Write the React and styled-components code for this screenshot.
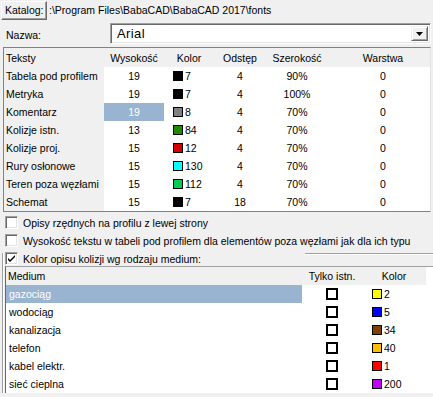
import React from 'react';
import styled, { createGlobalStyle } from 'styled-components';

const Global = createGlobalStyle`
  html, body { margin: 0; padding: 0; background: #f0f0f0; }
  body { font-family: "Liberation Sans", Arial, sans-serif; font-size: 10.5px; color: #000; }
  * { box-sizing: border-box; }
`;

const Window = styled.div`
  width: 433px;
  height: 397px;
  overflow: hidden;
  background: #f0f0f0;
  display: flex;
  flex-direction: column;
`;

const TopRow = styled.div`
  display: flex;
  align-items: center;
  gap: 2px;
  padding: 1px 0 0 1px;
  height: 20px;
`;

const Button = styled.button`
  width: 46px;
  height: 19px;
  padding: 0 0 1px 3px;
  text-align: left;
  font: inherit;
  background: #f0f0f0;
  border: 1px solid;
  border-color: #fff #696969 #696969 #fff;
  box-shadow: inset -1px -1px #a0a0a0;
  color: #000;
`;

const PathText = styled.span`
  white-space: nowrap;
  padding-bottom: 1px;
`;

const NameRow = styled.div`
  display: flex;
  align-items: center;
  margin-top: 3px;
  height: 21px;
`;

const FieldLabel = styled.span`
  width: 110px;
  padding-left: 6px;
  padding-top: 3px;
`;

const Combo = styled.div`
  width: 321px;
  height: 21px;
  display: flex;
  align-items: center;
  background: #fff;
  border: 1px solid;
  border-color: #a0a0a0 #fff #fff #a0a0a0;
  box-shadow: inset 1px 1px #696969, inset -1px -1px #e3e3e3;
  padding: 2px 2px 2px 6px;
`;

const ComboText = styled.span`
  flex: 1;
  font-size: 13px;
  letter-spacing: 0.4px;
`;

const DropButton = styled.div`
  width: 17px;
  height: 15px;
  background: #f0f0f0;
  border: 1px solid;
  border-color: #f0f0f0 #696969 #696969 #f0f0f0;
  box-shadow: inset 1px 1px #fff, inset -1px -1px #a0a0a0;
  display: flex;
  align-items: center;
  justify-content: center;
`;

const Table = styled.div`
  margin: 3px 0 0 3px;
  width: 428px;
  height: 165px;
  border: 1px solid #828282;
  border-right-color: #e3e3e3;
  overflow: hidden;
  background: #fff;
`;

const UpperRow = styled.div`
  display: grid;
  grid-template-columns: 100px 60px 50px 52px 62px 110px;
  height: ${p => p.$h}px;
  align-items: stretch;
`;

const Cell = styled.div`
  display: flex;
  align-items: center;
  justify-content: ${p => (p.$left ? 'flex-start' : 'center')};
  padding-left: ${p => p.$pl || 0}px;
  background: ${p => (p.$sel ? '#99b4d1' : p.$gray ? '#f0f0f0' : '#fff')};
  color: ${p => (p.$sel ? '#fff' : '#000')};
  white-space: nowrap;
  overflow: hidden;
  gap: ${p => p.$gap || 0}px;
`;

const Swatch = styled.span`
  width: 10px;
  height: 10px;
  background: ${p => p.$c};
  border: 1px solid #000;
  flex: none;
`;

const Checks = styled.div`
  display: flex;
  flex-direction: column;
  gap: 5px;
  padding-top: 4px;
`;

const CheckRow = styled.label`
  display: flex;
  align-items: center;
  height: 13px;
  gap: 5px;
  margin-left: ${p => p.$ml ?? 5}px;
  width: ${p => (p.$w ? `${p.$w}px` : 'auto')};
  white-space: nowrap;
`;

const Box = styled.span`
  width: 13px;
  height: 13px;
  flex: none;
  background: #fff;
  border: 1px solid;
  border-color: #a0a0a0 #fff #fff #a0a0a0;
  box-shadow: inset 1px 1px #696969, inset -1px -1px #e3e3e3;
  display: flex;
  align-items: center;
  justify-content: center;
`;

const Group = styled.div`
  margin-left: 2px;
  flex: 1;
  display: flex;
  flex-direction: column;
`;

const GroupHead = styled.div`
  display: flex;
  align-items: flex-start;
  height: 13px;
`;

const Corner = styled.div`
  width: 1px;
  margin-top: 1px;
  border-top: 1px solid #a0a0a0;
`;

const Rule = styled.div`
  flex: 1;
  margin-top: 1px;
  height: 2px;
  border-top: 1px solid #a0a0a0;
  border-bottom: 1px solid #fff;
`;

const GroupBody = styled.div`
  flex: 1;
  margin-top: -12px;
  padding: 13px 0 0 2px;
  border-left: 1px solid #a0a0a0;
  box-shadow: inset 1px 0 #fff;
  display: flex;
  flex-direction: column;
`;

const Grid = styled.div`
  flex: 1;
  border-top: 1px solid #a0a0a0;
  border-left: 1px solid #696969;
  background: #fff;
  width: 440px;
`;

const LowerRow = styled.div`
  display: grid;
  grid-template-columns: 296px 60px 64px 1fr;
  height: 18px;
`;

const Tick = styled.span`
  width: 12px;
  height: 12px;
  border: 2px solid #000;
  background: #fff;
`;

const upper = [
  ['Tabela pod profilem', '19', '#000', '7', '4', '90%', '0'],
  ['Metryka', '19', '#000', '7', '4', '100%', '0'],
  ['Komentarz', '19', '#808080', '8', '4', '70%', '0', true],
  ['Kolizje istn.', '13', '#1f8a00', '84', '4', '70%', '0'],
  ['Kolizje proj.', '15', '#d40000', '12', '4', '70%', '0'],
  ['Rury osłonowe', '15', '#00ffff', '130', '4', '70%', '0'],
  ['Teren poza węzłami', '15', '#00cc55', '112', '4', '70%', '0'],
  ['Schemat', '15', '#000', '7', '18', '70%', '0'],
];

const lower = [
  ['gazociąg', '#ffff00', '2', true],
  ['wodociąg', '#0000ff', '5'],
  ['kanalizacja', '#804000', '34'],
  ['telefon', '#ffbf00', '40'],
  ['kabel elektr.', '#ff0000', '1'],
  ['sieć cieplna', '#bf00ff', '200'],
];

const CheckMark = () => (
  <svg width="9" height="9" viewBox="0 0 9 9">
    <path d="M1 4 L3 6 L8 1 L8 3 L3 8 L1 6 Z" fill="#000" />
  </svg>
);

export default function App() {
  return (
    <>
      <Global />
      <Window>
        <TopRow>
          <Button>Katalog:</Button>
          <PathText>:\Program Files\BabaCAD\BabaCAD 2017\fonts</PathText>
        </TopRow>
        <NameRow>
          <FieldLabel>Nazwa:</FieldLabel>
          <Combo>
            <ComboText>Arial</ComboText>
            <DropButton>
              <svg width="7" height="4" viewBox="0 0 7 4">
                <path d="M0 0 H7 L3.5 4 Z" fill="#000" />
              </svg>
            </DropButton>
          </Combo>
        </NameRow>
        <Table>
          <UpperRow $h={19}>
            <Cell $gray $left $pl={2}>Teksty</Cell>
            <Cell $gray>Wysokość</Cell>
            <Cell $gray>Kolor</Cell>
            <Cell $gray>Odstęp</Cell>
            <Cell $gray>Szerokość</Cell>
            <Cell $gray>Warstwa</Cell>
          </UpperRow>
          {upper.map(([n, h, c, k, o, s, w, sel]) => (
            <UpperRow $h={18} key={n}>
              <Cell $gray $left $pl={2}>{n}</Cell>
              <Cell $sel={sel}>{h}</Cell>
              <Cell $left $pl={9} $gap={2}>
                <Swatch $c={c} />
                {k}
              </Cell>
              <Cell>{o}</Cell>
              <Cell>{s}</Cell>
              <Cell>{w}</Cell>
            </UpperRow>
          ))}
        </Table>
        <Checks>
          <CheckRow>
            <Box />
            Opisy rzędnych na profilu z lewej strony
          </CheckRow>
          <CheckRow>
            <Box />
            Wysokość tekstu w tabeli pod profilem dla elementów poza węzłami jak dla ich typu
          </CheckRow>
          <Group>
            <GroupHead>
              <Corner />
              <CheckRow $ml={2} $w={300}>
                <Box>
                  <CheckMark />
                </Box>
                Kolor opisu kolizji wg rodzaju medium:
              </CheckRow>
              <Rule />
            </GroupHead>
            <GroupBody>
              <Grid>
                <LowerRow>
                  <Cell $gray $left $pl={2}>Medium</Cell>
                  <Cell $gray>Tylko istn.</Cell>
                  <Cell $gray>Kolor</Cell>
                  <Cell />
                </LowerRow>
                {lower.map(([n, c, k, sel]) => (
                  <LowerRow key={n}>
                    <Cell $left $pl={3} $sel={sel}>{n}</Cell>
                    <Cell>
                      <Tick />
                    </Cell>
                    <Cell $left $pl={10} $gap={2}>
                      <Swatch $c={c} />
                      {k}
                    </Cell>
                    <Cell />
                  </LowerRow>
                ))}
              </Grid>
            </GroupBody>
          </Group>
        </Checks>
      </Window>
    </>
  );
}
